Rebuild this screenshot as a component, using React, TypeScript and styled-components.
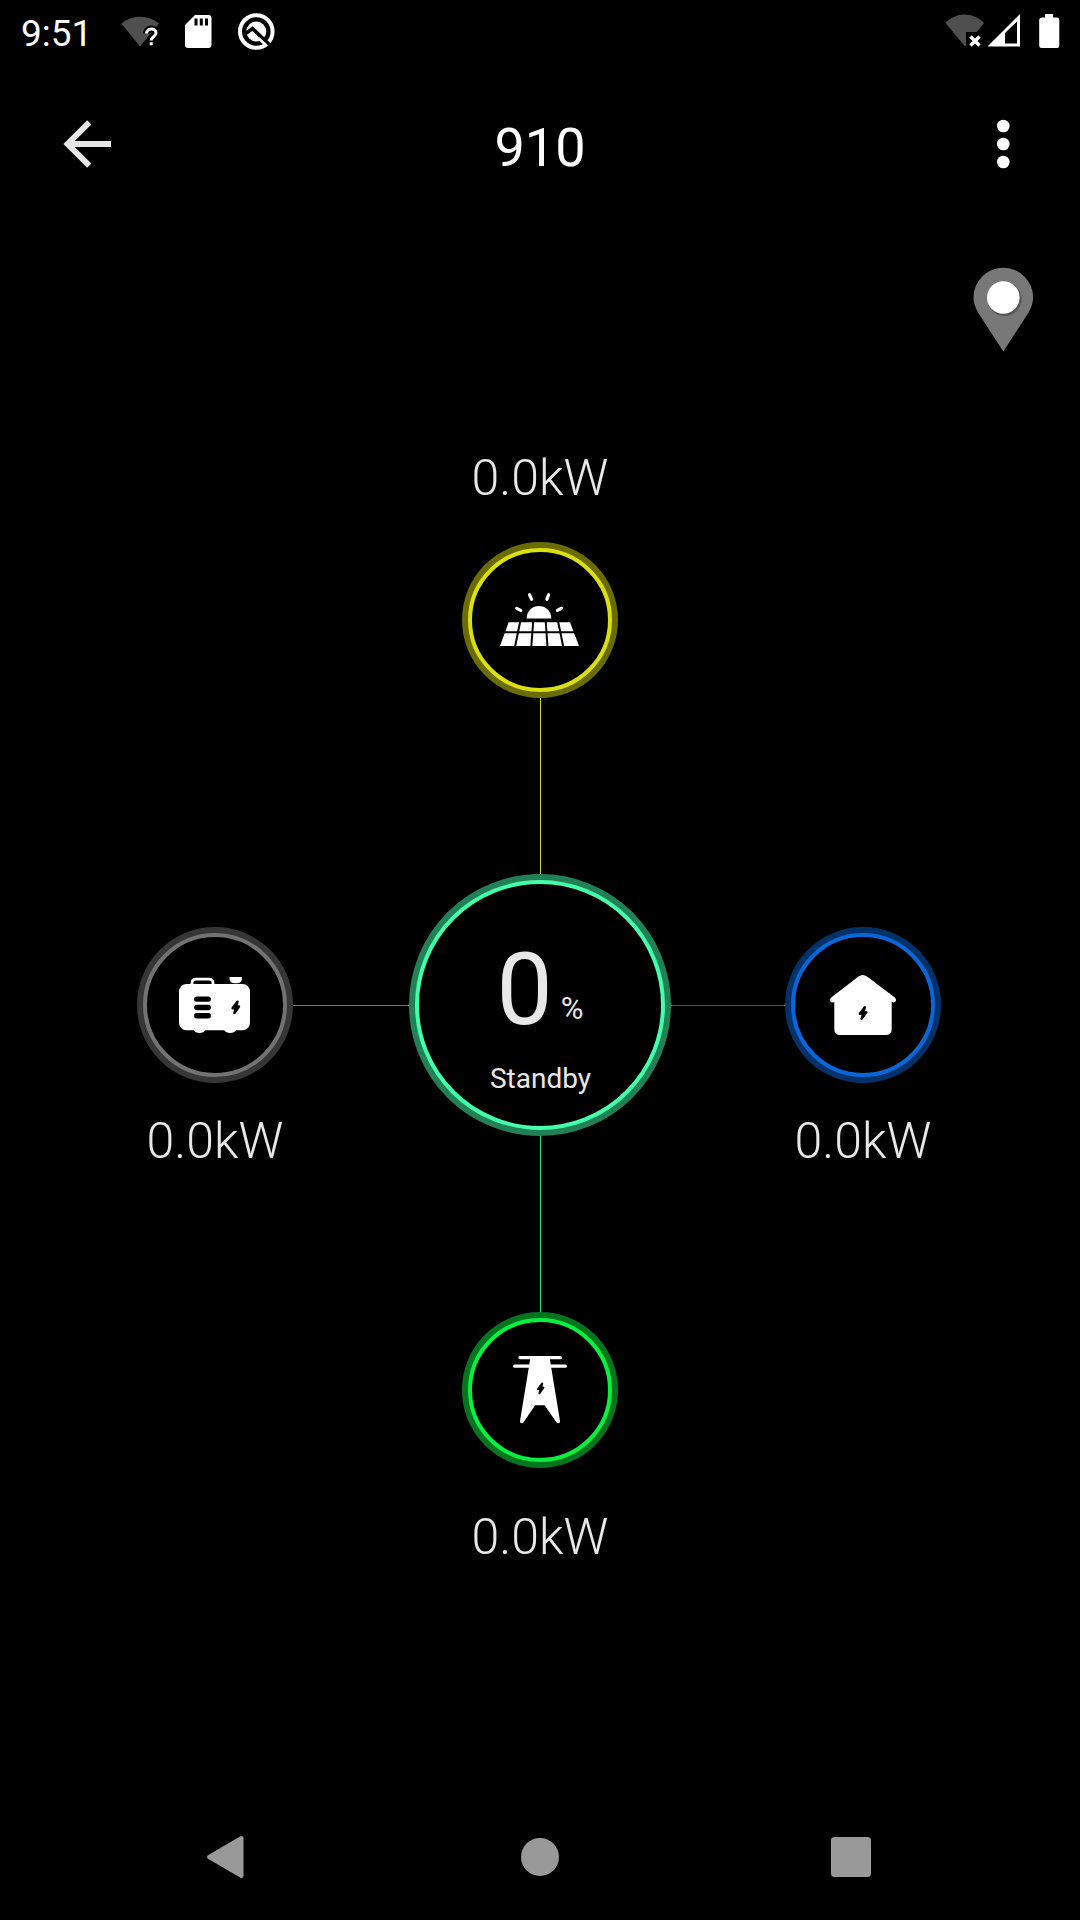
import React from "react";
import styled, { createGlobalStyle } from "styled-components";

const GlobalStyle = createGlobalStyle`
  * { box-sizing: border-box; }
  html, body { margin: 0; background: #000; }
  svg { display: block; overflow: visible; }
`;

const Screen = styled.div`
  width: 1080px;
  height: 1920px;
  display: flex;
  flex-direction: column;
  overflow: hidden;
  background: #000;
  color: #e8e8e8;
  font-family: Roboto, "Noto Sans", sans-serif;
`;

const StatusBar = styled.header`
  height: 64px;
  flex: none;
  display: flex;
  align-items: center;
  justify-content: space-between;
  padding: 0 20px 0 21px;
`;

const StatusGroup = styled.div`
  display: flex;
  align-items: center;
`;

const Clock = styled.span`
  width: 99px;
  padding-top: 3px;
  color: #fff;
  font-size: 37px;
  line-height: 42px;
`;

const TitleBar = styled.nav`
  height: 160px;
  flex: none;
  display: grid;
  grid-template-columns: 240px 1fr 240px;
  align-items: center;
  padding: 0 46px 0 60px;
`;

const IconButton = styled.button<{ $end?: boolean }>`
  display: flex;
  width: 54px;
  height: 54px;
  padding: 0;
  border: 0;
  background: none;
  justify-self: ${(p) => (p.$end ? "end" : "start")};
`;

const Title = styled.h1`
  margin: 0 0 0 -14px;
  padding-top: 7px;
  color: #fff;
  font-size: 54px;
  font-weight: 400;
  line-height: 64px;
  text-align: center;
`;

const LocationRow = styled.div`
  height: 206px;
  flex: none;
  display: flex;
  justify-content: flex-end;
  padding: 42px 46px 0 0;
`;

const Diagram = styled.main`
  flex: 1;
  display: grid;
  grid-template-columns: 156px 116px 262px 114px 156px;
  grid-template-rows: 112px 156px 176px 262px 176px 156px 1fr;
  padding-left: 137px;
`;

const Cell = styled.div<{ $area: string; $top?: number }>`
  grid-area: ${(p) => p.$area};
  display: flex;
  flex-direction: column;
  align-items: center;
  padding-top: ${(p) => p.$top ?? 0}px;
`;

const Ring = styled.div<{ $size: number; $outer: string }>`
  width: ${(p) => p.$size}px;
  height: ${(p) => p.$size}px;
  flex: none;
  border: 6px solid ${(p) => p.$outer};
  border-radius: 50%;
  background: ${(p) => p.$outer};
`;

const RingFace = styled.div<{ $inner: string }>`
  width: 100%;
  height: 100%;
  display: flex;
  flex-direction: column;
  align-items: center;
  border: 4px solid ${(p) => p.$inner};
  border-radius: 50%;
  background: #000;
`;

const Power = styled.span<{ $gap?: number }>`
  margin-top: ${(p) => p.$gap ?? 0}px;
  font-size: 50px;
  font-weight: 300;
  line-height: 60px;
  white-space: nowrap;
`;

const VLine = styled.div<{ $row: number; $color: string }>`
  grid-column: 3;
  grid-row: ${(p) => p.$row};
  justify-self: center;
  width: 1px;
  margin-left: 1px;
  background: ${(p) => p.$color};
`;

const HLine = styled.div<{ $col: number; $color: string }>`
  grid-column: ${(p) => p.$col};
  grid-row: 4;
  height: 1px;
  margin-top: 131px;
  background: ${(p) => p.$color};
`;

const Charge = styled.div`
  display: flex;
  align-items: flex-end;
  margin-top: 47px;
`;

const ChargeValue = styled.span`
  font-size: 100px;
  line-height: 117px;
`;

const ChargeUnit = styled.span`
  margin: 0 0 21px 8px;
  font-size: 31px;
  line-height: 36px;
`;

const ChargeState = styled.span`
  margin-top: 13px;
  padding-left: 1px;
  font-size: 28px;
  line-height: 36px;
`;

const NavBar = styled.footer`
  height: 126px;
  flex: none;
  display: grid;
  grid-template-columns: 289px 106px 289px;
  align-items: center;
  padding: 0 198px;
`;

const NavItem = styled.button<{ $align: string }>`
  width: 54px;
  height: 54px;
  padding: 0;
  border: 0;
  background: none;
  justify-self: ${(p) => p.$align};
`;

const WifiUnknown = () => (
  <svg width="64" height="40" viewBox="120 12 64 40">
    <path d="M121.500 23.500C132 14.500 148 14.500 159 23.500L140 46.500Z" fill="#4f4f4f" />
    <path d="M146.500 33.500C146.500 27.500 156 27.500 156 33C156 36.500 151.200 36.500 151.200 40.500M151.200 42.300V45.300" fill="none" stroke="#000" strokeWidth="7" />
    <path d="M146.500 33.500C146.500 27.500 156 27.500 156 33C156 36.500 151.200 36.500 151.200 40.500M151.200 42.300V45.300" fill="none" stroke="#fff" strokeWidth="3" />
  </svg>
);

const SdCard = () => (
  <svg width="54" height="40" viewBox="184 12 54 40">
    <path d="M195 15H208.500Q211.500 15 211.500 18V45Q211.500 48 208.500 48H188Q185 48 185 45V25Z" fill="#fff" />
    <path d="M194.500 18.500H197.500V25.500H194.500ZM199.800 18.500H202.800V25.500H199.800ZM205 18.500H208V25.500H205Z" fill="#000" />
  </svg>
);

const QBadge = () => (
  <svg width="38" height="40" viewBox="238 12 38 40">
    <circle cx="256.300" cy="31.500" r="16.300" fill="none" stroke="#fff" strokeWidth="4" />
    <circle cx="256.300" cy="31.500" r="10" fill="#fff" />
    <path d="M245 34L252.500 28.500L272 47" fill="none" stroke="#000" strokeWidth="3.600" />
    <path d="M258 38L266 45" stroke="#fff" strokeWidth="2.500" />
  </svg>
);

const WifiOff = () => (
  <svg width="42" height="40" viewBox="945 12 42 40">
    <path d="M945.500 23C956 11.500 973 11.500 984 23L965 46.500Z" fill="#4f4f4f" />
    <path d="M966 32H984V50H966Z" fill="#000" />
    <path d="M970.500 36.500L979.500 45.500M979.500 36.500L970.500 45.500" stroke="#fff" strokeWidth="3.400" />
  </svg>
);

const Signal = () => (
  <svg width="52" height="40" viewBox="987 12 52 40">
    <path d="M987.500 46.500L1020 14V46.500Z" fill="#fff" />
    <path d="M1005 33L1017 21.500V43.500H1005Z" fill="#000" />
  </svg>
);

const Battery = () => (
  <svg width="21" height="40" viewBox="1039 12 21 40">
    <path d="M1045 14H1053V17.500H1057Q1059.300 17.500 1059.300 20V45.500Q1059.300 48 1057 48H1041.500Q1039.200 48 1039.200 45.500V20Q1039.200 17.500 1041.500 17.500H1045Z" fill="#fff" />
  </svg>
);

const Bolt = ({ x, y, s = 1 }: { x: number; y: number; s?: number }) => (
  <path
    transform={`translate(${x} ${y}) scale(${s})`}
    d="M1.800 -5.600L-3 0.800L0.300 0.800L-1.300 5.600L3.200 -0.800L0.200 -0.800Z"
    fill="#000"
    stroke="#000"
    strokeWidth="2.600"
    strokeLinejoin="round"
  />
);

const NodeSvg = ({ children }: { children: React.ReactNode }) => (
  <svg width="136" height="136" viewBox="-68 -68 136 136" fill="#fff">
    {children}
  </svg>
);

const SolarIcon = () => (
  <NodeSvg>
    <path d="M-31.300 2.300H30L39 26H-40Z" />
    <path d="M-40 12.300H40M-19.700 1L-25 27M-6.800 1L-8.700 27M5.700 1L7.500 27M18 1L23.300 27" stroke="#000" strokeWidth="2" />
    <path d="M-13.300 -1.500C-13.300 -18.200 11.300 -18.200 11.300 -1.500Z" />
    <path d="M-23.300 -11.700L-19.300 -9.600M-10.500 -25.300L-8.400 -20.600M8.600 -25.300L6.900 -20.600M21.500 -11.700L17.300 -9.600" stroke="#fff" strokeWidth="3.200" strokeLinecap="round" />
  </NodeSvg>
);

const GeneratorIcon = () => (
  <NodeSvg>
    <rect x="-36" y="-21" width="71" height="46.300" rx="7.500" />
    <path d="M-23 -20V-22Q-23 -25.900 -19 -25.900H-6Q-2 -25.900 -2 -22V-20" fill="none" stroke="#fff" strokeWidth="2.800" />
    <path d="M14.500 -28H27V-27Q27 -22 22.500 -21.700H19Q14.500 -22 14.500 -27Z" />
    <path d="M-21.500 25C-19.500 29 -11.500 29 -9.500 25ZM9.200 25C11.200 29 19.200 29 21.200 25Z" />
    <path d="M-18.200 -5.900H-6.800M-18.200 2.500H-6.800M-18.200 10.800H-6.800" stroke="#000" strokeWidth="5.400" strokeLinecap="round" />
    <Bolt x={20.700} y={2.300} />
  </NodeSvg>
);

const HomeIcon = () => (
  <NodeSvg>
    <path d="M-4.500 -28.500Q-0.300 -31.500 4 -28.500L31.800 -7.500Q34 -5.500 32.300 -3.200Q31 -2 28.700 -3V24Q28.700 30 22.700 30H-22.700Q-28.700 30 -28.700 24V-3Q-31 -2 -32.300 -3.200Q-34 -5.500 -31.800 -7.500Z" />
    <Bolt x={0} y={8} />
  </NodeSvg>
);

const GridIcon = () => (
  <NodeSvg>
    <path d="M-20 -32.300H20.300M-25.300 -23.800H25.300" stroke="#fff" strokeWidth="3.300" strokeLinecap="round" />
    <path d="M-9.300 -34H9.300L20 31Q20.200 34 17 33L4.600 15.300H-4.800L-17 33Q-20.200 34 -20 31Z" />
    <Bolt x={0.600} y={-1.600} s={0.850} />
  </NodeSvg>
);

type NodeProps = { outer: string; inner: string; size?: number; children: React.ReactNode };

const FlowNode = ({ outer, inner, size = 156, children }: NodeProps) => (
  <Ring $size={size} $outer={outer}>
    <RingFace $inner={inner}>{children}</RingFace>
  </Ring>
);

export default function App() {
  return (
    <Screen>
      <GlobalStyle />
      <StatusBar>
        <StatusGroup>
          <Clock>9:51</Clock>
          <WifiUnknown />
          <SdCard />
          <QBadge />
        </StatusGroup>
        <StatusGroup>
          <WifiOff />
          <Signal />
          <Battery />
        </StatusGroup>
      </StatusBar>

      <TitleBar>
        <IconButton aria-label="Back">
          <svg width="54" height="54" viewBox="60 117 54 54">
            <path d="M111 144H68M89.300 122.300L67.600 144L89.300 165.700" fill="none" stroke="#e6e6e6" strokeWidth="6" />
          </svg>
        </IconButton>
        <Title>910</Title>
        <IconButton $end aria-label="More">
          <svg width="54" height="54" viewBox="980 117 54 54" fill="#fff">
            <circle cx="1003.300" cy="126" r="6.300" />
            <circle cx="1003.300" cy="144" r="6.300" />
            <circle cx="1003.300" cy="162" r="6.300" />
          </svg>
        </IconButton>
      </TitleBar>

      <LocationRow>
        <svg width="61" height="86" viewBox="973 266 61 86">
          <path d="M1003.300 351.500L978 312.500C975 307 973.500 302 973.500 297.500A29.800 29.800 0 0 1 1033.100 297.500C1033.100 302 1031.600 307 1028.600 312.500Z" fill="#787878" />
          <circle cx="1004.500" cy="299" r="17" fill="#555" />
          <circle cx="1003.300" cy="297.500" r="16.300" fill="#fff" />
        </svg>
      </LocationRow>

      <Diagram>
        <Cell $area="1 / 3 / 3 / 4" $top={18}>
          <Power>0.0kW</Power>
        </Cell>
        <Cell $area="2 / 3">
          <FlowNode outer="#6a6c00" inner="#dadf10"><SolarIcon /></FlowNode>
        </Cell>
        <VLine $row={3} $color="#d3d82c" />
        <Cell $area="4 / 1 / 6 / 2" $top={53}>
          <FlowNode outer="#363636" inner="#727272"><GeneratorIcon /></FlowNode>
          <Power $gap={28}>0.0kW</Power>
        </Cell>
        <HLine $col={2} $color="#747474" />
        <Cell $area="4 / 3">
          <FlowNode size={262} outer="#218055" inner="#43ffaa">
            <Charge>
              <ChargeValue>0</ChargeValue>
              <ChargeUnit>%</ChargeUnit>
            </Charge>
            <ChargeState>Standby</ChargeState>
          </FlowNode>
        </Cell>
        <HLine $col={4} $color="#1c5cc8" />
        <Cell $area="4 / 5 / 6 / 6" $top={53}>
          <FlowNode outer="#003269" inner="#0866d8"><HomeIcon /></FlowNode>
          <Power $gap={28}>0.0kW</Power>
        </Cell>
        <VLine $row={5} $color="#2cdc5a" />
        <Cell $area="6 / 3 / 8 / 4">
          <FlowNode outer="#04751f" inner="#06f040"><GridIcon /></FlowNode>
          <Power $gap={39}>0.0kW</Power>
        </Cell>
      </Diagram>

      <NavBar>
        <NavItem $align="start" aria-label="Back">
          <svg width="54" height="54" viewBox="198 1830 54 54">
            <path d="M209 1857L241.500 1838V1876Z" fill="#999" stroke="#999" strokeWidth="4" strokeLinejoin="round" />
          </svg>
        </NavItem>
        <NavItem $align="center" aria-label="Home">
          <svg width="54" height="54" viewBox="513 1830 54 54">
            <circle cx="540" cy="1857" r="19" fill="#999" />
          </svg>
        </NavItem>
        <NavItem $align="end" aria-label="Recents">
          <svg width="54" height="54" viewBox="828 1830 54 54">
            <rect x="831" y="1837" width="40" height="40" rx="3.500" fill="#999" />
          </svg>
        </NavItem>
      </NavBar>
    </Screen>
  );
}
